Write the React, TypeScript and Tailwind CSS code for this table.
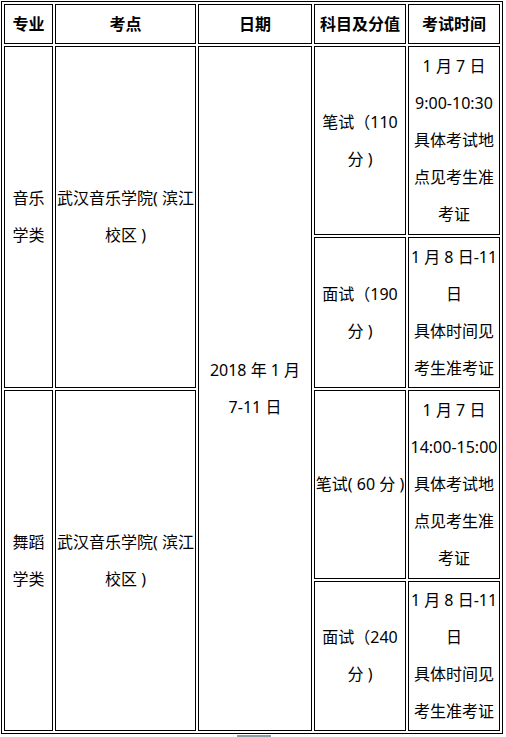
const cell = 'border border-black p-0 text-center align-middle whitespace-nowrap'

const head = ['专业', '考点', '日期', '科目及分值', '考试时间']
const widths = ['w-[49px]', 'w-[141px]', 'w-[114px]', 'w-[92px]', 'w-[92px]']

function Lines({ items }: { items: string[] }) {
  return (
    <>
      {items.map((t, i) => (
        <div key={i}>{t}</div>
      ))}
    </>
  )
}

export default function App() {
  return (
    <div className="bg-white w-[506px] h-[737px] pt-[1px] pl-[1px] text-black text-[16px] leading-[37px] font-['Noto_Sans','Noto_Sans_CJK_SC',sans-serif]">
      <table className="table-fixed w-[502px] border-separate border-spacing-[2px] border border-black">
        <thead>
          <tr>
            {head.map((h, i) => (
              <th key={h} className={`${cell} ${widths[i]} h-[40px] font-bold leading-[20px]`}>
                {h}
              </th>
            ))}
          </tr>
        </thead>
        <tbody>
          <tr>
            <td rowSpan={2} className={cell}>
              <Lines items={['音乐', '学类']} />
            </td>
            <td rowSpan={2} className={cell}>
              <Lines items={['武汉音乐学院( 滨江', '校区 )']} />
            </td>
            <td rowSpan={4} className={cell}>
              <Lines items={['2018 年 1 月', '7-11 日']} />
            </td>
            <td className={`${cell} h-[189px]`}>
              <Lines items={['笔试（110', '分 )']} />
            </td>
            <td className={cell}>
              <Lines items={['1 月 7 日', '9:00-10:30', '具体考试地', '点见考生准', '考证']} />
            </td>
          </tr>
          <tr>
            <td className={`${cell} h-[151px]`}>
              <Lines items={['面试（190', '分 )']} />
            </td>
            <td className={cell}>
              <Lines items={['1 月 8 日-11', '日', '具体时间见', '考生准考证']} />
            </td>
          </tr>
          <tr>
            <td rowSpan={2} className={cell}>
              <Lines items={['舞蹈', '学类']} />
            </td>
            <td rowSpan={2} className={cell}>
              <Lines items={['武汉音乐学院( 滨江', '校区 )']} />
            </td>
            <td className={`${cell} h-[189px]`}>
              <Lines items={['笔试( 60 分 )']} />
            </td>
            <td className={cell}>
              <Lines items={['1 月 7 日', '14:00-15:00', '具体考试地', '点见考生准', '考证']} />
            </td>
          </tr>
          <tr>
            <td className={`${cell} h-[150px]`}>
              <Lines items={['面试（240', '分 )']} />
            </td>
            <td className={cell}>
              <Lines items={['1 月 8 日-11', '日', '具体时间见', '考生准考证']} />
            </td>
          </tr>
        </tbody>
      </table>
      <div className="mx-auto mt-[1px] w-[34px] h-[2px] bg-[#8c9aa4]" />
    </div>
  )
}
